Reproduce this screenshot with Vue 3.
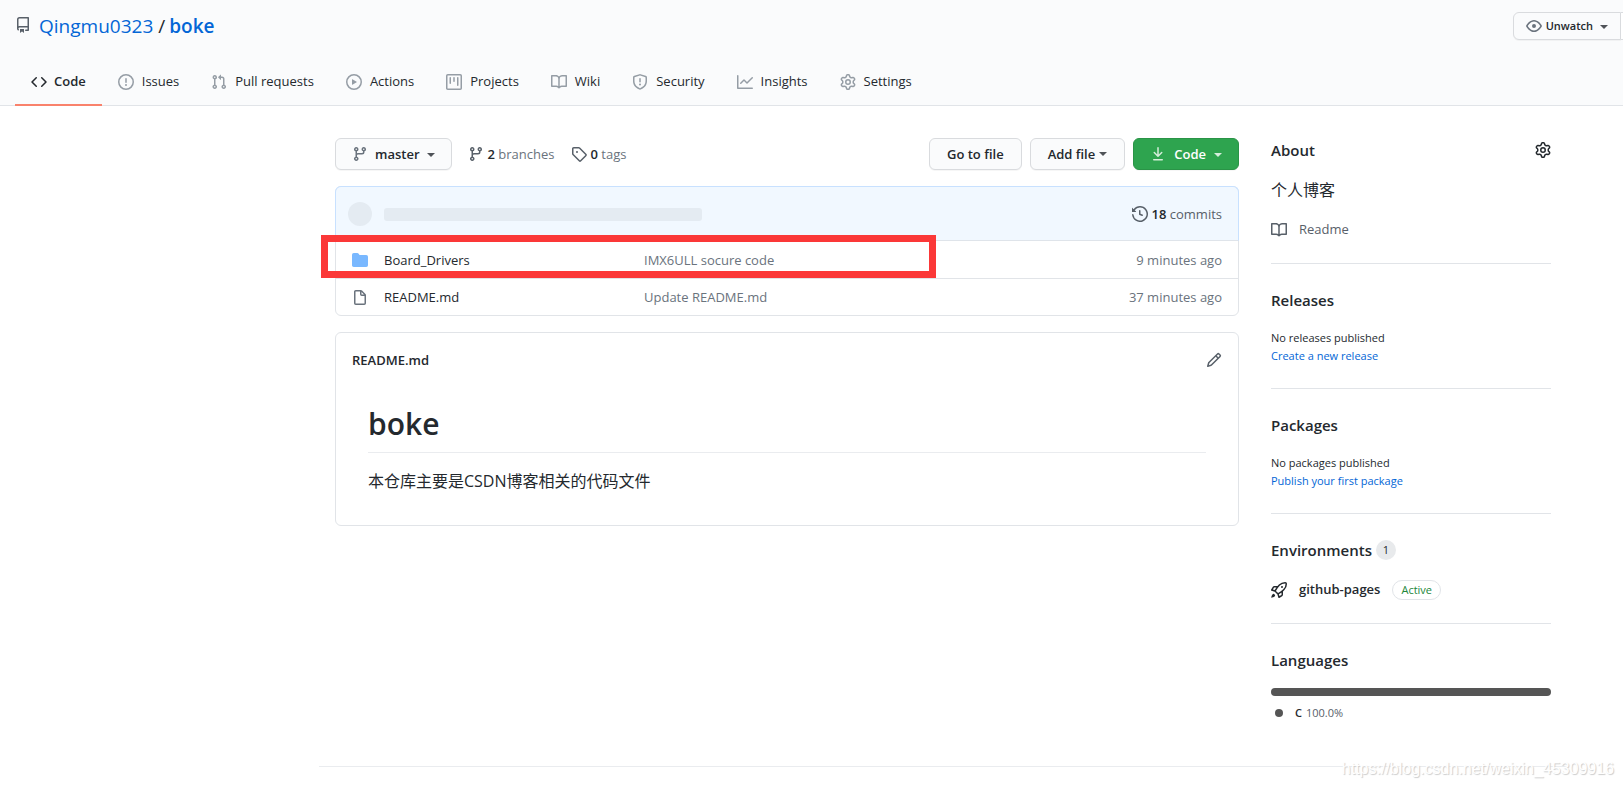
<script setup>
const icons = {
  repo: 'M2 2.5A2.5 2.5 0 014.5 0h8.75a.75.75 0 01.75.75v12.5a.75.75 0 01-.75.75h-2.5a.75.75 0 110-1.5h1.75v-2h-8a1 1 0 00-.714 1.7.75.75 0 01-1.072 1.05A2.495 2.495 0 012 11.5v-9zm10.5-1V9h-8c-.356 0-.694.074-1 .208V2.5a1 1 0 011-1h8zM5 12.25v3.25a.25.25 0 00.4.2l1.45-1.087a.25.25 0 01.3 0L8.6 15.7a.25.25 0 00.4-.2v-3.25a.25.25 0 00-.25-.25h-3.5a.25.25 0 00-.25.25z',
  code: 'M4.72 3.22a.75.75 0 011.06 1.06L2.06 8l3.72 3.72a.75.75 0 11-1.06 1.06L.47 8.53a.75.75 0 010-1.06l4.25-4.25zm6.56 0a.75.75 0 10-1.06 1.06L13.94 8l-3.72 3.72a.75.75 0 101.06 1.06l4.25-4.25a.75.75 0 000-1.06l-4.25-4.25z',
  issue: 'M8 1.5a6.5 6.5 0 100 13 6.5 6.5 0 000-13zM0 8a8 8 0 1116 0A8 8 0 010 8zm9 3a1 1 0 11-2 0 1 1 0 012 0zm-.25-6.25a.75.75 0 00-1.5 0v3.5a.75.75 0 001.5 0v-3.5z',
  pull: 'M7.177 3.073L9.573.677A.25.25 0 0110 .854v4.792a.25.25 0 01-.427.177L7.177 3.427a.25.25 0 010-.354zM3.75 2.5a.75.75 0 100 1.5.75.75 0 000-1.5zm-2.25.75a2.25 2.25 0 113 2.122v5.256a2.251 2.251 0 11-1.5 0V5.372A2.25 2.25 0 011.5 3.25zM11 2.5h-1V4h1a1 1 0 011 1v5.628a2.251 2.251 0 101.5 0V5A2.5 2.5 0 0011 2.5zm1 10.25a.75.75 0 111.5 0 .75.75 0 01-1.5 0zM3.75 12a.75.75 0 100 1.5.75.75 0 000-1.5z',
  play: 'M1.5 8a6.5 6.5 0 1113 0 6.5 6.5 0 01-13 0zM8 0a8 8 0 100 16A8 8 0 008 0zM6.379 5.227A.25.25 0 006 5.442v5.117a.25.25 0 00.379.214l4.264-2.559a.25.25 0 000-.428L6.379 5.227z',
  project: 'M1.75 0A1.75 1.75 0 000 1.75v12.5C0 15.216.784 16 1.75 16h12.5A1.75 1.75 0 0016 14.25V1.75A1.75 1.75 0 0014.25 0H1.75zM1.5 1.75a.25.25 0 01.25-.25h12.5a.25.25 0 01.25.25v12.5a.25.25 0 01-.25.25H1.75a.25.25 0 01-.25-.25V1.75zM11.75 3a.75.75 0 00-.75.75v7.5a.75.75 0 001.5 0v-7.5a.75.75 0 00-.75-.75zm-8.25.75a.75.75 0 011.5 0v5.5a.75.75 0 01-1.5 0v-5.5zM8 3a.75.75 0 00-.75.75v3.5a.75.75 0 001.5 0v-3.5A.75.75 0 008 3z',
  book: 'M0 1.75A.75.75 0 01.75 1h4.253c1.227 0 2.317.59 3 1.501A3.744 3.744 0 0111.006 1h4.245a.75.75 0 01.75.75v10.5a.75.75 0 01-.75.75h-4.507a2.25 2.25 0 00-1.591.659l-.622.621a.75.75 0 01-1.06 0l-.622-.621A2.25 2.25 0 005.258 13H.75a.75.75 0 01-.75-.75V1.75zm8.755 3a2.25 2.25 0 012.25-2.25H14.5v9h-3.757c-.71 0-1.4.201-1.992.572l.004-7.322zm-1.504 7.324l.004-5.073-.002-2.253A2.25 2.25 0 005.003 2.5H1.5v9h3.757a3.75 3.75 0 011.994.574z',
  shield: 'M7.467.133a1.75 1.75 0 011.066 0l5.25 1.68A1.75 1.75 0 0115 3.48V7c0 1.566-.32 3.182-1.303 4.682-.983 1.498-2.585 2.813-5.032 3.855a1.7 1.7 0 01-1.33 0c-2.447-1.042-4.049-2.357-5.032-3.855C1.32 10.182 1 8.566 1 7V3.48a1.75 1.75 0 011.217-1.667l5.25-1.68zm.61 1.429a.25.25 0 00-.153 0l-5.25 1.68a.25.25 0 00-.174.238V7c0 1.358.275 2.666 1.057 3.86.784 1.194 2.121 2.34 4.366 3.297a.2.2 0 00.154 0c2.245-.956 3.582-2.104 4.366-3.298C13.225 9.666 13.5 8.36 13.5 7V3.48a.25.25 0 00-.174-.237l-5.25-1.68zM9 10.5a1 1 0 11-2 0 1 1 0 012 0zm-.25-5.75a.75.75 0 10-1.5 0v3a.75.75 0 001.5 0v-3z',
  graph: 'M1.5 1.75a.75.75 0 00-1.5 0v12.5c0 .414.336.75.75.75h14.5a.75.75 0 000-1.5H1.5V1.75zm14.28 2.53a.75.75 0 00-1.06-1.06L10 7.94 7.53 5.47a.75.75 0 00-1.06 0L3.22 8.72a.75.75 0 001.06 1.06L7 7.06l2.47 2.47a.75.75 0 001.06 0l5.25-5.25z',
  gear: 'M7.429 1.525a6.593 6.593 0 011.142 0c.036.003.108.036.137.146l.289 1.105c.147.56.55.967.997 1.189.174.086.341.183.501.29.417.278.97.423 1.53.27l1.102-.303c.11-.03.175.016.195.046.219.31.41.641.573.989.014.031.022.11-.059.19l-.815.806c-.411.406-.562.957-.53 1.456a4.588 4.588 0 010 .582c-.032.499.119 1.05.53 1.456l.815.806c.08.08.073.159.059.19a6.494 6.494 0 01-.573.99c-.02.029-.086.074-.195.045l-1.103-.303c-.559-.153-1.112-.008-1.529.27-.16.107-.327.204-.5.29-.449.222-.851.628-.998 1.189l-.289 1.105c-.029.11-.101.143-.137.146a6.613 6.613 0 01-1.142 0c-.036-.003-.108-.037-.137-.146l-.289-1.105c-.147-.56-.55-.967-.997-1.189a4.502 4.502 0 01-.501-.29c-.417-.278-.97-.423-1.53-.27l-1.102.303c-.11.03-.175-.016-.195-.046a6.492 6.492 0 01-.573-.989c-.014-.031-.022-.11.059-.19l.815-.806c.411-.406.562-.957.53-1.456a4.587 4.587 0 010-.582c.032-.499-.119-1.05-.53-1.456l-.815-.806c-.08-.08-.073-.159-.059-.19a6.44 6.44 0 01.573-.99c.02-.029.086-.075.195-.045l1.103.303c.559.153 1.112.008 1.529-.27.16-.107.327-.204.5-.29.449-.222.851-.628.998-1.189l.289-1.105c.029-.11.101-.143.137-.146zM8 0c-.236 0-.47.01-.701.03-.743.065-1.29.615-1.458 1.261l-.29 1.106c-.017.066-.078.158-.211.224a5.994 5.994 0 00-.668.386c-.123.082-.233.09-.3.071L3.27 2.776c-.644-.177-1.392.02-1.82.63a7.977 7.977 0 00-.704 1.217c-.315.675-.111 1.422.363 1.891l.815.806c.05.048.098.147.088.294a6.084 6.084 0 000 .772c.01.147-.038.246-.088.294l-.815.806c-.474.469-.678 1.216-.363 1.891.2.428.436.835.704 1.218.428.609 1.176.806 1.82.63l1.103-.303c.066-.019.176-.011.299.071.213.143.436.272.668.386.133.066.194.158.212.224l.289 1.106c.169.646.715 1.196 1.458 1.26a8.094 8.094 0 001.402 0c.743-.064 1.29-.614 1.458-1.26l.29-1.106c.017-.066.078-.158.211-.224a5.98 5.98 0 00.668-.386c.123-.082.233-.09.3-.071l1.102.302c.644.177 1.392-.02 1.82-.63.268-.382.505-.789.704-1.217.315-.675.111-1.422-.364-1.891l-.814-.806c-.05-.048-.098-.147-.088-.294a6.1 6.1 0 000-.772c-.01-.147.039-.246.088-.294l.814-.806c.475-.469.679-1.216.364-1.891a7.992 7.992 0 00-.704-1.218c-.428-.609-1.176-.806-1.82-.63l-1.103.303c-.066.019-.176.011-.299-.071a5.991 5.991 0 00-.668-.386c-.133-.066-.194-.158-.212-.224L10.16 1.29C9.99.645 9.444.095 8.701.031A8.094 8.094 0 008 0zm1.5 8a1.5 1.5 0 11-3 0 1.5 1.5 0 013 0zM11 8a3 3 0 11-6 0 3 3 0 016 0z',
  eye: 'M1.679 7.932c.412-.621 1.242-1.75 2.366-2.717C5.175 4.242 6.527 3.5 8 3.5c1.473 0 2.824.742 3.955 1.715 1.124.967 1.954 2.096 2.366 2.717a.119.119 0 010 .136c-.412.621-1.242 1.75-2.366 2.717C10.825 11.758 9.473 12.5 8 12.5c-1.473 0-2.824-.742-3.955-1.715C2.92 9.818 2.09 8.69 1.679 8.068a.119.119 0 010-.136zM8 2c-1.981 0-3.67.992-4.933 2.078C1.797 5.169.88 6.423.43 7.1a1.619 1.619 0 000 1.798c.45.678 1.367 1.932 2.637 3.024C4.329 13.008 6.019 14 8 14c1.981 0 3.67-.992 4.933-2.078 1.27-1.091 2.187-2.345 2.637-3.023a1.619 1.619 0 000-1.798c-.45-.678-1.367-1.932-2.637-3.023C11.671 2.992 9.981 2 8 2zm0 8a2 2 0 100-4 2 2 0 000 4z',
  branch: 'M11.75 2.5a.75.75 0 100 1.5.75.75 0 000-1.5zm-2.25.75a2.25 2.25 0 113 2.122V6A2.5 2.5 0 0110 8.5H6a1 1 0 00-1 1v1.128a2.251 2.251 0 11-1.5 0V5.372a2.25 2.25 0 111.5 0v1.836A2.492 2.492 0 016 7h4a1 1 0 001-1v-.628A2.25 2.25 0 019.5 3.25zM4.25 12a.75.75 0 100 1.5.75.75 0 000-1.5zM3.5 3.25a.75.75 0 111.5 0 .75.75 0 01-1.5 0z',
  tag: 'M2.5 7.775V2.75a.25.25 0 01.25-.25h5.025a.25.25 0 01.177.073l6.25 6.25a.25.25 0 010 .354l-5.025 5.025a.25.25 0 01-.354 0l-6.25-6.25a.25.25 0 01-.073-.177zm-1.5 0V2.75C1 1.784 1.784 1 2.75 1h5.025c.464 0 .91.184 1.238.513l6.25 6.25a1.75 1.75 0 010 2.474l-5.026 5.026a1.75 1.75 0 01-2.474 0l-6.25-6.25A1.75 1.75 0 011 7.775zM6 5a1 1 0 100 2 1 1 0 000-2z',
  download: 'M7.47 10.78a.75.75 0 001.06 0l3.75-3.75a.75.75 0 00-1.06-1.06L8.75 8.44V1.75a.75.75 0 00-1.5 0v6.69L4.78 5.97a.75.75 0 00-1.06 1.06l3.75 3.75zM3.75 13a.75.75 0 000 1.5h8.5a.75.75 0 000-1.5h-8.5z',
  history: 'M1.643 3.143L.427 1.927A.25.25 0 000 2.104V5.75c0 .138.112.25.25.25h3.646a.25.25 0 00.177-.427L2.715 4.215a6.5 6.5 0 11-1.18 4.458.75.75 0 10-1.493.154 8.001 8.001 0 101.6-5.684zM7.75 4a.75.75 0 01.75.75v2.992l2.028.812a.75.75 0 01-.557 1.392l-2.5-1A.75.75 0 017 8.25v-3.5A.75.75 0 017.75 4z',
  folder: 'M1.75 1A1.75 1.75 0 000 2.75v10.5C0 14.216.784 15 1.75 15h12.5A1.75 1.75 0 0016 13.25v-8.5A1.75 1.75 0 0014.25 3h-6.5a.25.25 0 01-.2-.1l-.9-1.2c-.33-.44-.85-.7-1.4-.7h-3.5z',
  file: 'M3.75 1.5a.25.25 0 00-.25.25v11.5c0 .138.112.25.25.25h8.5a.25.25 0 00.25-.25V6H9.75A1.75 1.75 0 018 4.25V1.5H3.75zm5.75.56v2.19c0 .138.112.25.25.25h2.19L9.5 2.06zM2 1.75C2 .784 2.784 0 3.75 0h5.086c.464 0 .909.184 1.237.513l3.414 3.414c.329.328.513.773.513 1.237v8.086A1.75 1.75 0 0112.25 15h-8.5A1.75 1.75 0 012 13.25V1.75z',
  pencil: 'M11.013 1.427a1.75 1.75 0 012.474 0l1.086 1.086a1.75 1.75 0 010 2.474l-8.61 8.61c-.21.21-.47.364-.756.445l-3.251.93a.75.75 0 01-.927-.928l.929-3.25a1.75 1.75 0 01.445-.758l8.61-8.61zm1.414 1.06a.25.25 0 00-.354 0L10.811 3.75l1.439 1.44 1.263-1.263a.25.25 0 000-.354l-1.086-1.086zM11.189 6.25L9.75 4.81l-6.286 6.287a.25.25 0 00-.064.108l-.558 1.953 1.953-.558a.249.249 0 00.108-.064l6.286-6.286z',
  rocket: 'M14.064 0a8.75 8.75 0 00-6.187 2.563l-.459.458c-.314.314-.616.641-.904.979H3.31a1.75 1.75 0 00-1.49.833L.11 7.607a.75.75 0 00.418 1.11l3.102.954c.037.051.079.1.124.145l2.429 2.428c.046.046.094.088.145.125l.954 3.102a.75.75 0 001.11.418l2.774-1.707a1.75 1.75 0 00.833-1.49V9.485c.338-.288.665-.59.979-.904l.458-.459A8.75 8.75 0 0016 1.936V1.75A1.75 1.75 0 0014.25 0h-.186zM10.5 10.625c-.088.06-.177.118-.266.175l-2.35 1.521.548 1.783 1.949-1.2a.25.25 0 00.119-.213v-2.066zM3.678 8.116L5.2 5.766c.058-.09.117-.178.176-.266H3.309a.25.25 0 00-.213.119l-1.2 1.95 1.782.547zm5.26-4.493A7.25 7.25 0 0114.063 1.5h.186a.25.25 0 01.25.25v.186a7.25 7.25 0 01-2.123 5.127l-.459.458a15.21 15.21 0 01-2.499 2.02l-2.317 1.5-2.143-2.143 1.5-2.317a15.25 15.25 0 012.02-2.5l.458-.458h.002zM12 5a1 1 0 11-2 0 1 1 0 012 0zm-8.44 9.56a1.5 1.5 0 10-2.12-2.12c-.734.73-1.047 2.332-1.15 3.003a.23.23 0 00.265.265c.671-.103 2.273-.416 3.005-1.148z',
}
const tabs = [
  ['code', 'Code'], ['issue', 'Issues'], ['pull', 'Pull requests'], ['play', 'Actions'],
  ['project', 'Projects'], ['book', 'Wiki'], ['shield', 'Security'], ['graph', 'Insights'], ['gear', 'Settings'],
]
const files = [
  { icon: 'folder', name: 'Board_Drivers', msg: 'IMX6ULL socure code', time: '9 minutes ago' },
  { icon: 'file', name: 'README.md', msg: 'Update README.md', time: '37 minutes ago' },
]
</script>

<template>
  <div class="page">
    <header class="top">
      <div class="title-row">
        <h1 class="title">
          <svg class="icon" viewBox="0 0 16 16"><path fill-rule="evenodd" :d="icons.repo" /></svg>
          <a href="#">Qingmu0323</a><span class="slash">/</span><a href="#" class="strong">boke</a>
        </h1>
        <div class="watch-group">
          <button class="btn btn-sm" type="button">
            <svg class="icon" viewBox="0 0 16 16"><path fill-rule="evenodd" :d="icons.eye" /></svg>
            Unwatch<span class="caret"></span>
          </button>
          <button class="watch-count" type="button" aria-label="Watchers"></button>
        </div>
      </div>
      <nav class="tabs" aria-label="Repository">
        <a v-for="([icon, label], i) in tabs" :key="label" href="#" class="tab" :class="{ active: i === 0 }">
          <svg class="icon" viewBox="0 0 16 16"><path fill-rule="evenodd" :d="icons[icon]" /></svg>
          {{ label }}
        </a>
      </nav>
    </header>

    <div class="container">
      <main class="main">
        <div class="toolbar">
          <button class="btn branch-btn" type="button">
            <svg class="icon" viewBox="0 0 16 16"><path fill-rule="evenodd" :d="icons.branch" /></svg>
            master<span class="caret"></span>
          </button>
          <a href="#" class="stat">
            <svg class="icon" viewBox="0 0 16 16"><path fill-rule="evenodd" :d="icons.branch" /></svg>
            <span><strong>2</strong> branches</span>
          </a>
          <a href="#" class="stat">
            <svg class="icon" viewBox="0 0 16 16"><path fill-rule="evenodd" :d="icons.tag" /></svg>
            <span><strong>0</strong> tags</span>
          </a>
          <div class="actions">
            <button class="btn wide" type="button">Go to file</button>
            <button class="btn wide add-btn" type="button">Add file<span class="caret"></span></button>
            <button class="btn primary" type="button">
              <svg class="icon" viewBox="0 0 16 16"><path :d="icons.download" /></svg>
              Code<span class="caret"></span>
            </button>
          </div>
        </div>

        <section class="files">
          <div class="commit-bar">
            <span class="avatar"></span>
            <span class="skeleton"></span>
            <a href="#" class="commits">
              <svg class="icon" viewBox="0 0 16 16"><path fill-rule="evenodd" :d="icons.history" /></svg>
              <span><strong>18</strong> commits</span>
            </a>
          </div>
          <table class="file-table">
            <tbody>
              <tr v-for="f in files" :key="f.name">
                <td class="c-icon"><svg class="icon" :class="f.icon" viewBox="0 0 16 16"><path fill-rule="evenodd" :d="icons[f.icon]" /></svg></td>
                <td class="c-name"><a href="#">{{ f.name }}</a></td>
                <td class="c-msg"><a href="#">{{ f.msg }}</a></td>
                <td class="c-time">{{ f.time }}</td>
              </tr>
            </tbody>
          </table>
          <div class="highlight"></div>
        </section>

        <article class="readme">
          <div class="readme-head">
            <h2>README.md</h2>
            <button class="plain" type="button" aria-label="Edit README">
              <svg class="icon" viewBox="0 0 16 16"><path fill-rule="evenodd" :d="icons.pencil" /></svg>
            </button>
          </div>
          <div class="readme-body">
            <h1>boke</h1>
            <p>本仓库主要是CSDN博客相关的代码文件</p>
          </div>
        </article>
      </main>

      <aside class="side">
        <section>
          <div class="side-head">
            <h2>About</h2>
            <button class="plain dark" type="button" aria-label="Edit repository details">
              <svg class="icon" viewBox="0 0 16 16"><path fill-rule="evenodd" :d="icons.gear" /></svg>
            </button>
          </div>
          <p class="desc">个人博客</p>
          <a href="#" class="readme-link">
            <svg class="icon" viewBox="0 0 16 16"><path fill-rule="evenodd" :d="icons.book" /></svg>
            Readme
          </a>
        </section>
        <section>
          <h2>Releases</h2>
          <p class="small">No releases published<br /><a href="#">Create a new release</a></p>
        </section>
        <section>
          <h2>Packages</h2>
          <p class="small">No packages published<br /><a href="#">Publish your first package</a></p>
        </section>
        <section>
          <h2>Environments <span class="counter">1</span></h2>
          <div class="env">
            <svg class="icon" viewBox="0 0 16 16"><path fill-rule="evenodd" :d="icons.rocket" /></svg>
            <a href="#">github-pages</a>
            <span class="label">Active</span>
          </div>
        </section>
        <section>
          <h2>Languages</h2>
          <div class="lang-bar"></div>
          <div class="lang"><span class="dot"></span><strong>C</strong> <span>100.0%</span></div>
        </section>
      </aside>
    </div>
    <hr class="foot" />
    <div class="watermark">https://blog.csdn.net/weixin_45309916</div>
  </div>
</template>

<style>
body { margin: 0; background: #fff; }
</style>

<style scoped>
* { box-sizing: border-box; }
.page {
  position: relative;
  min-height: 100vh;
  overflow: hidden;
  font: 13px/21px "Open Sans", "Noto Sans CJK SC", sans-serif;
  color: #24292e;
}
h1, h2, p { margin: 0; }
a { color: #0366d6; text-decoration: none; }
button { font-family: inherit; }
strong { font-weight: 600; color: #24292e; }
.icon { width: 16px; height: 16px; flex: none; fill: currentColor; display: block; }

.top { background: #fafbfc; border-bottom: 1px solid #e1e4e8; }
.title-row { display: flex; justify-content: space-between; align-items: flex-start; padding: 12px 0 0 15px; height: 59px; }
.title { display: flex; align-items: center; font-size: 19px; line-height: 28px; font-weight: 400; }
.title .icon { color: #586069; margin: 0 8px 2px 0; }
.title .strong { font-weight: 600; }
.slash { margin: 0 4px 0 5px; }
.watch-group { display: flex; }
.watch-count { width: 2px; height: 28px; padding: 0; border: solid #dadcdf; border-width: 1px 0; background: #fff; }

.btn {
  display: flex; align-items: center;
  height: 32px; padding: 0 16px;
  border: 1px solid #d9dbde; border-radius: 6px;
  background: #fafbfc; color: #24292e;
  font-size: 13px; line-height: 20px; font-weight: 600;
  box-shadow: 0 1px 0 rgba(27, 31, 35, .04);
  white-space: nowrap;
}
.btn .icon { color: #6a737d; }
.btn-sm { height: 28px; padding: 0 12px; font-size: 11px; border-radius: 6px 0 0 6px; }
.btn-sm .icon { margin-right: 4px; }
.wide { padding: 0 17px; }
.caret { border: 4px solid transparent; border-top-color: currentColor; border-bottom: 0; margin: 2px 0 0 7px; opacity: .8; }

.tabs { display: flex; padding-left: 15px; }
.tab {
  display: flex; align-items: center; gap: 8px;
  height: 47px; padding: 0 16px; margin-bottom: -1px;
  color: #24292e; border-bottom: 2px solid transparent;
}
.tab .icon { color: #959da5; }
.tab.active { gap: 7px; font-weight: 600; border-color: #f9826c; }
.tab.active .icon { color: #24292e; }

.container { display: grid; grid-template-columns: minmax(0, 1fr) 280px; gap: 32px; padding: 32px 72px 0 335px; }
.toolbar { display: flex; align-items: center; height: 32px; margin-bottom: 16px; }
.branch-btn .icon { margin-right: 7px; }
.branch-btn { margin-right: 16px; }
.stat { display: flex; align-items: center; gap: 4px; margin-right: 16px; color: #6a737d; }
.stat .icon { color: #586069; }
.actions { display: flex; gap: 8px; margin-left: auto; }
.add-btn .caret { margin: 0 0 0 4px; }
.primary { background: #2ea44f; border-color: #2a9447; color: #fff; }
.primary .icon { color: #d5edda; margin-right: 8px; }
.primary .caret { margin-left: 8px; }

.files { position: relative; border: 1px solid #e1e4e8; border-radius: 6px; }
.commit-bar {
  display: flex; align-items: center;
  margin: -1px -1px 0; height: 55px; padding: 1px 16px 0 12px;
  border: 1px solid #c8e1ff; border-bottom-color: #dfe4ea; border-radius: 6px 6px 0 0;
  background: #f1f8ff;
}
.avatar { width: 24px; height: 24px; border-radius: 50%; background: #e4ebf2; margin-right: 12px; }
.skeleton { flex: 0 1 318px; height: 13px; border-radius: 3px; background: #e4ebf2; }
.commits { display: flex; align-items: center; gap: 4px; margin-left: auto; color: #586069; }
.file-table { width: 100%; border-collapse: collapse; table-layout: fixed; }
.file-table td { height: 37px; padding: 2px 0 0; vertical-align: middle; }
.file-table tr + tr td { border-top: 1px solid #e1e4e8; }
.c-icon { width: 48px; }
.c-icon .icon { margin-left: 16px; color: #6a737d; }
.c-icon .folder { color: #79b8ff; }
.c-name { width: 260px; }
.c-name a { color: #24292e; }
.c-msg a, .c-time { color: #6a737d; }
.file-table .c-time { width: 160px; padding-right: 16px; text-align: right; }
.highlight { position: absolute; left: -15px; top: 48px; width: 615px; height: 43px; border: 7px solid #fb3838; pointer-events: none; }

.readme { margin-top: 16px; border: 1px solid #e1e4e8; border-radius: 6px; }
.readme-head { display: flex; align-items: center; justify-content: space-between; padding: 15px 16px 0; height: 39px; }
.readme-head h2 { font-size: 13px; line-height: 21px; font-weight: 600; }
.plain { padding: 0; border: 0; background: none; color: #586069; }
.dark { color: #24292e; }
.readme-body { padding: 32px; }
.readme-body h1 { font-size: 30px; line-height: 40px; font-weight: 600; padding-bottom: 8px; border-bottom: 1px solid #eaecef; }
.readme-body p { font-size: 16px; line-height: 24px; margin-top: 16px; }

.side section + section { border-top: 1px solid #e1e4e8; margin-top: 23px; padding-top: 24px; }
.side h2 { display: flex; align-items: center; gap: 4px; font-size: 15px; line-height: 24px; font-weight: 600; }
.side-head { display: flex; justify-content: space-between; align-items: center; }
.desc { margin-top: 16px; font-size: 16px; line-height: 24px; }
.readme-link { display: flex; align-items: center; gap: 12px; margin-top: 17px; color: #586069; }
.small { margin-top: 17px; font-size: 11px; line-height: 18px; }
.counter { min-width: 20px; height: 20px; border-radius: 10px; background: #e8eaec; font-size: 11px; line-height: 20px; font-weight: 500; text-align: center; }
.env { display: flex; align-items: center; margin-top: 17px; }
.env a { margin: 0 12px; color: #24292e; font-weight: 600; }
.label { height: 20px; padding: 0 8px; border: 1px solid #e1e4e8; border-radius: 10px; color: #22863a; font-size: 11px; line-height: 18px; font-weight: 500; }
.lang-bar { height: 8px; margin-top: 16px; border-radius: 6px; background: #555; }
.lang { display: flex; align-items: center; gap: 4px; margin-top: 8px; font-size: 11px; line-height: 18px; color: #586069; }
.dot { width: 8px; height: 8px; margin: 0 8px 0 4px; border-radius: 50%; background: #555; }
.foot { margin: 44px 56px 0 319px; border: 0; border-top: 1px solid #eaecef; }
.watermark { position: absolute; right: 9px; bottom: 8px; font: 16px/20px "Liberation Sans", Arial, sans-serif; color: #fff; text-shadow: 1px 1px 1px #ccc; }
</style>
